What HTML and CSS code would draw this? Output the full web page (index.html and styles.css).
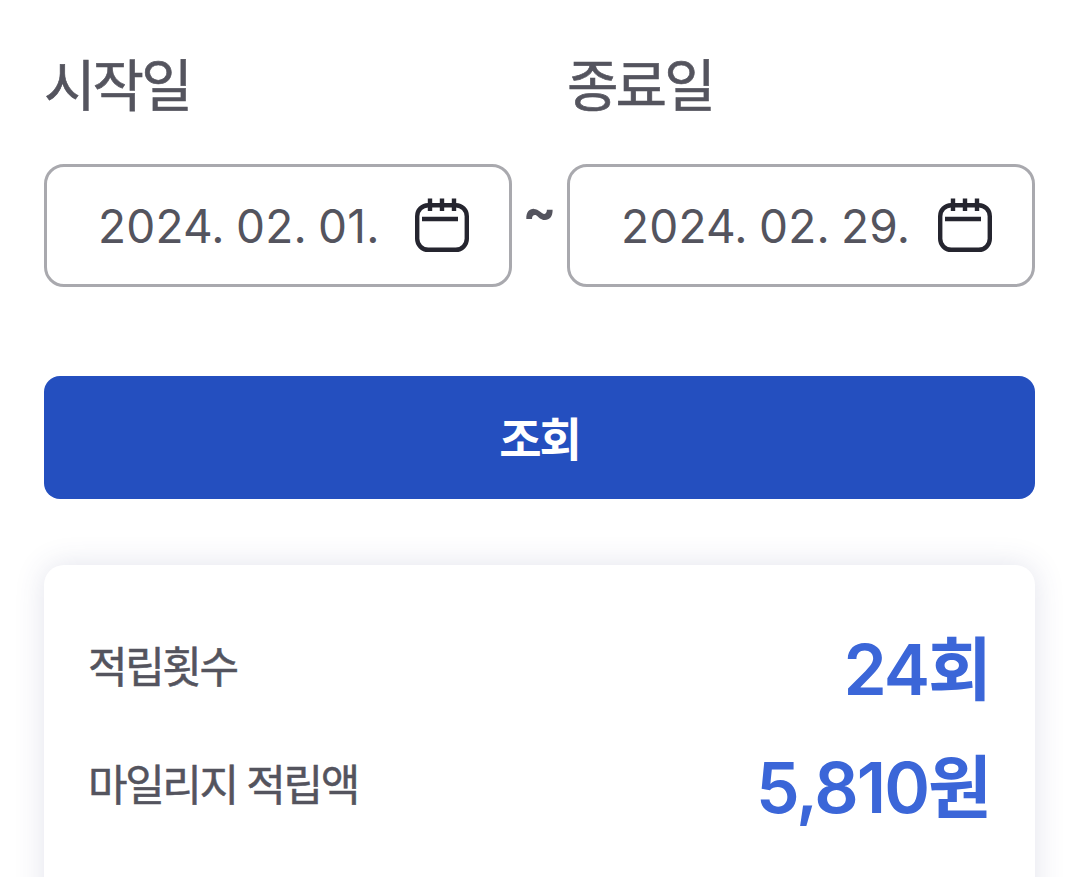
FILE: index.html
```html
<!DOCTYPE html>
<html lang="ko">

<head>
  <meta charset="UTF-8">
  <meta name="viewport" content="width=device-width, initial-scale=1.0">
  <title>마일리지 조회</title>
  <link rel="stylesheet" href="styles.css">
</head>

<body>

  <main class="page">
    <!-- Date range -->
    <div class="date-range">
      <div class="date-field">
        <p class="date-label">시작일</p>
        <div class="date-input">
          <span class="date-value">2024. 02. 01.</span>
          <svg class="calendar-icon" viewBox="0 0 56 56" fill="none" stroke="#25252f" stroke-width="4.4">
            <rect x="3.2" y="8.2" width="49.6" height="44.6" rx="11" />
            <path d="M16 1.5v12.5M28 1.5v12.5M40 1.5v12.5M8 22h36" />
          </svg>
        </div>
      </div>
      <span class="date-sep">~</span>
      <div class="date-field">
        <p class="date-label">종료일</p>
        <div class="date-input">
          <span class="date-value">2024. 02. 29.</span>
          <svg class="calendar-icon" viewBox="0 0 56 56" fill="none" stroke="#25252f" stroke-width="4.4">
            <rect x="3.2" y="8.2" width="49.6" height="44.6" rx="11" />
            <path d="M16 1.5v12.5M28 1.5v12.5M40 1.5v12.5M8 22h36" />
          </svg>
        </div>
      </div>
    </div>

    <button class="search-btn">조회</button>

    <!-- Summary card -->
    <section class="summary-card">
      <div class="summary-row">
        <span class="summary-label">적립횟수</span>
        <span class="summary-value">24회</span>
      </div>
      <div class="summary-row">
        <span class="summary-label">마일리지 적립액</span>
        <span class="summary-value">5,810원</span>
      </div>
    </section>
  </main>

</body>

</html>
```

FILE: styles.css
```css
* {
  margin: 0;
  padding: 0;
  box-sizing: border-box;
}

html,
body {
  height: 877px;
  overflow: hidden;
}

body {
  font-family: 'Inter', 'Noto Sans CJK KR', sans-serif;
  background-color: #fff;
  color: #54545e;
}

.page {
  height: 877px;
  overflow: hidden;
  padding: 47px 37px 0 44px;
}

/* Date range */
.date-range {
  display: flex;
  align-items: flex-end;
}

.date-field {
  width: 468px;
}

.date-label {
  font-size: 56px;
  line-height: 78px;
  font-weight: 400;
  -webkit-text-stroke: 0.6px #54545e;
  letter-spacing: -2.9px;
  margin-bottom: 39px;
}

.date-input {
  display: flex;
  align-items: center;
  justify-content: space-between;
  height: 123px;
  padding: 0 39px 0 51px;
  border: 3px solid #a9a9ae;
  border-radius: 20px;
}

.date-value {
  font-size: 46px;
  letter-spacing: 0.2px;
  word-spacing: -2px;
}

.calendar-icon {
  width: 56px;
  height: 56px;
  margin-bottom: 2px;
  flex-shrink: 0;
}

.date-sep {
  width: 55px;
  height: 95px;
  margin-bottom: 28px;
  text-align: center;
  font-size: 50px;
  font-weight: 700;
  line-height: 95px;
}

/* Search button */
.search-btn {
  display: block;
  width: 100%;
  height: 123px;
  margin-top: 89px;
  padding-bottom: 4px;
  background-color: #244fbf;
  color: #fff;
  border: none;
  border-radius: 16px;
  font-family: inherit;
  font-size: 46px;
  font-weight: 700;
  letter-spacing: -2px;
}

/* Summary card */
.summary-card {
  height: 400px;
  margin-top: 66px;
  padding: 40px 45px 0 44px;
  background-color: #fff;
  border-radius: 20px;
  box-shadow: 0 0 30px rgba(60, 70, 130, 0.15);
}

.summary-row {
  display: flex;
  align-items: center;
  justify-content: space-between;
  height: 118px;
}

.summary-label {
  font-size: 43px;
  font-weight: 400;
  -webkit-text-stroke: 0.5px #54545e;
  letter-spacing: -2.4px;
}

.summary-value {
  font-size: 69.5px;
  font-weight: 600;
  letter-spacing: -2px;
  color: #3b66d8;
}
```
